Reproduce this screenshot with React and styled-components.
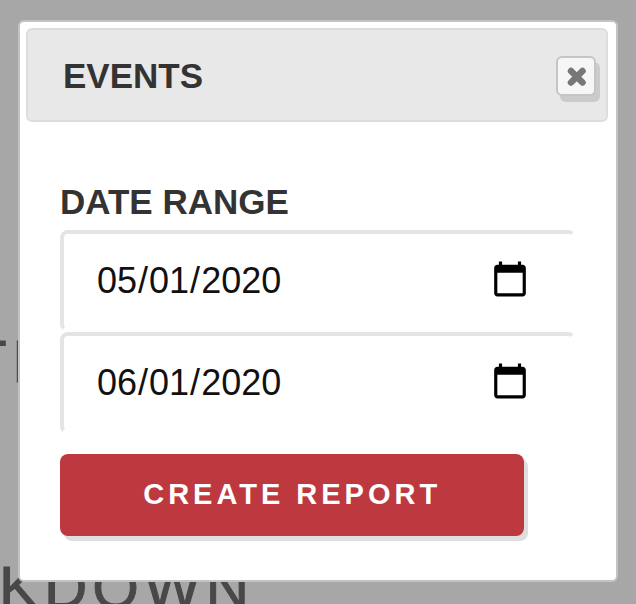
import React, { useState } from 'react'
import styled, { createGlobalStyle } from 'styled-components'

const GlobalStyle = createGlobalStyle`
  * {
    box-sizing: border-box;
  }

  body {
    margin: 0;
    background-color: #a7a7a7;
    color: #333333;
    font-family: 'Liberation Sans', Arial, sans-serif;
  }
`

const Page = styled.div`
  position: relative;
  min-height: 100vh;
  overflow: hidden;
  padding: 20px 18px;
`

const Backdrop = styled.div`
  position: absolute;
  inset: 0;
  overflow: hidden;
  color: #484848;
`

const BackdropText = styled.div`
  position: absolute;
  top: ${props => props.$top}px;
  left: ${props => props.$left}px;
  font-size: 60px;
  line-height: 64px;
  letter-spacing: 5px;
  white-space: nowrap;
  -webkit-text-stroke: 1px #484848;
`

const Dialog = styled.section`
  position: relative;
  padding: 6px 8px 44px 6px;
  background-color: #ffffff;
  border: 2px solid #c3c3c3;
  border-radius: 6px;
`

const DialogHeader = styled.header`
  display: flex;
  align-items: center;
  justify-content: space-between;
  padding: 26px 10px 24px 35px;
  background-color: #e8e8e8;
  border: 2px solid #dddddd;
  border-radius: 6px;
`

const Title = styled.h2`
  margin: 0;
  font-size: 35px;
  line-height: 40px;
  font-weight: 700;
`

const CloseButton = styled.button`
  display: flex;
  align-items: center;
  justify-content: center;
  width: 40px;
  height: 40px;
  padding: 0;
  background-color: #f6f6f6;
  border: 2px solid #c5c5c5;
  border-radius: 6px;
  box-shadow: 4px 6px 0 #cbcbcb;
  cursor: pointer;
`

const Form = styled.form`
  display: flex;
  flex-direction: column;
  align-items: flex-start;
  padding: 60px 32px 0 34px;
`

const DateRange = styled.fieldset`
  display: flex;
  flex-direction: column;
  width: 100%;
  min-width: 0;
  margin: 0;
  padding: 0;
  border: none;
`

const Legend = styled.legend`
  padding: 0 0 8px;
  font-size: 35px;
  line-height: 40px;
  font-weight: 700;
`

const DateInput = styled.input`
  display: block;
  width: 100%;
  height: 102px;
  padding: 0 43px 0 32px;
  background-color: #ffffff;
  border: 4px solid #ffffff;
  border-top-color: #e4e4e4;
  border-left-color: #e4e4e4;
  border-radius: 8px;
  color: #111111;
  font-family: inherit;
  font-size: 36px;

  &::-webkit-calendar-picker-indicator {
    width: 38px;
    height: 38px;
    margin-bottom: 4px;
    padding: 0;
    background-size: 38px 38px;
  }

  &:focus {
    outline: none;
  }
`

const SubmitButton = styled.button`
  width: 90%;
  height: 82px;
  margin-top: 20px;
  padding: 0 0 2px;
  background-color: #bd393f;
  border: none;
  border-radius: 8px;
  box-shadow: 4px 5px 0 #dedede;
  color: #ffffff;
  font-family: inherit;
  font-size: 29px;
  font-weight: 700;
  letter-spacing: 4px;
  cursor: pointer;
`

const CloseIcon = () => (
  <svg width="24" height="24" viewBox="0 0 24 24" fill="none" stroke="#777777" strokeWidth="6.5" strokeLinecap="round" strokeLinejoin="round" aria-hidden="true">
    <path d="M7 7l11.5 11.5M18.5 7l-11.5 11.5" />
  </svg>
)

const App = () => {
  const [isOpen, setIsOpen] = useState(true)
  const [startDate, setStartDate] = useState('2020-05-01')
  const [endDate, setEndDate] = useState('2020-06-01')

  const handleSubmit = (e) => {
    e.preventDefault()
    setIsOpen(false)
  }

  return (
    <>
      <GlobalStyle />
      <Page>
        <Backdrop aria-hidden="true">
          <BackdropText $top={330} $left={-30}>TI</BackdropText>
          <BackdropText $top={556} $left={-1}>KDOWN</BackdropText>
        </Backdrop>

        {isOpen && (
          <Dialog role="dialog" aria-labelledby="dialog-title">
            <DialogHeader>
              <Title id="dialog-title">EVENTS</Title>
              <CloseButton type="button" aria-label="Close" onClick={() => setIsOpen(false)}>
                <CloseIcon />
              </CloseButton>
            </DialogHeader>

            <Form onSubmit={handleSubmit}>
              <DateRange>
                <Legend>DATE RANGE</Legend>
                <DateInput
                  type="date"
                  aria-label="Start date"
                  value={startDate}
                  onChange={(e) => setStartDate(e.target.value)}
                />
                <DateInput
                  type="date"
                  aria-label="End date"
                  value={endDate}
                  onChange={(e) => setEndDate(e.target.value)}
                />
              </DateRange>
              <SubmitButton type="submit">CREATE REPORT</SubmitButton>
            </Form>
          </Dialog>
        )}
      </Page>
    </>
  )
}

export default App
